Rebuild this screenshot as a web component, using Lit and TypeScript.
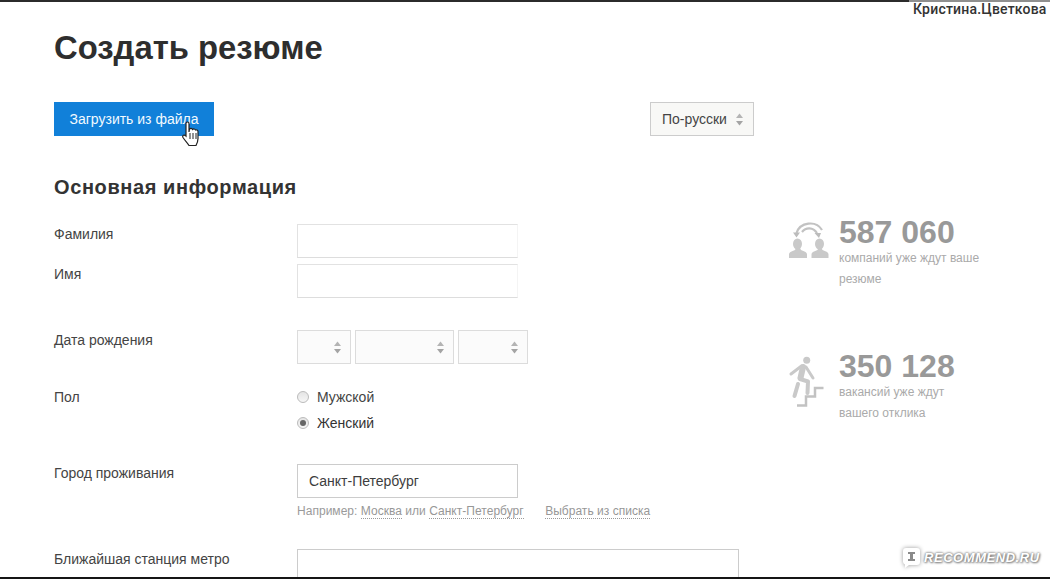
import { LitElement, html, css } from "lit";
import { customElement } from "lit/decorators.js";

const arrows = () => html`<svg width="7" height="13" viewBox="0 0 7 13"><path d="M3.500 0.500L7 5H0Z" fill="#b4b4b4"/><path d="M0 8H7L3.500 12.500Z" fill="#a4a4a4"/></svg>`;

@customElement("app-root")
export class AppRoot extends LitElement {
  static styles = css`
    :host {
      display: block;
      width: 1050px;
      height: 579px;
      position: relative;
      overflow: hidden;
      background: #fff;
      font-family: "Liberation Sans", Arial, sans-serif;
      color: #333;
      font-size: 14px;
    }
    .topbar { display: flex; height: 2px; }
    .topbar .dark { width: 909px; background: #2b2b2b; }
    .topbar .light { flex: 1; background: #8f8f8f; }
    .user {
      position: absolute; left: 913px; top: 2px;
      font: 500 14px/15px Roboto, sans-serif; color: #333; letter-spacing: 0.2px;
    }
    .page { display: grid; grid-template-columns: 735px 1fr; padding-left: 54px; }
    h1 { margin: 26px 0 0; font-size: 32.8px; line-height: 40px; font-weight: 700; color: #2e2e2e; }
    .actions { display: flex; justify-content: space-between; width: 700px; margin-top: 34px; }
    .upload {
      width: 160px; height: 34px; background: #1180d9; color: #f2faff;
      font-size: 14px; display: flex; align-items: center; justify-content: center;
    }
    .lang {
      box-sizing: border-box; width: 104px; height: 34px; border: 1px solid #ccc; background: #f8f8f6;
      display: flex; align-items: center; justify-content: space-between; padding: 0 10px 0 11px;
      font-size: 14px; color: #444;
    }
    h2 { margin: 38px 0 0; font-size: 20px; line-height: 26px; font-weight: 700; color: #333; letter-spacing: 0.6px; }
    .row { display: grid; grid-template-columns: 243px 1fr; }
    .label { font-size: 14px; line-height: 20px; color: #444; }
    .label.up { margin-top: -1px; }
    .field {
      box-sizing: border-box; height: 34px; width: 221px; border: 1px solid #d9d9d9; background: #fff;
      display: flex; align-items: center; padding: 0 11px; font-size: 14px; color: #444;
    }
    .ghost { border-color: #e2e2e2; border-right-color: #f4f4f4; border-bottom-color: #ddd; }
    .r1 { margin-top: 24px; }
    .r2 { margin-top: 6px; }
    .r3 { margin-top: 32px; }
    .r4 { margin-top: 23px; }
    .r5 { margin-top: 31px; }
    .r6 { margin-top: 30px; }
    .date { display: flex; gap: 4px; }
    .dsel {
      box-sizing: border-box; height: 34px; border: 1px solid #dcdcdc; background: #fbfbfb;
      display: flex; align-items: center; justify-content: flex-end; padding-right: 9px;
    }
    .radios { display: flex; flex-direction: column; gap: 6px; }
    .radio { display: flex; align-items: center; gap: 8px; font-size: 14px; line-height: 20px; color: #444; }
    .radio.on { color: #333; }
    .dot {
      box-sizing: border-box; width: 12px; height: 12px; border-radius: 50%; border: 1px solid #bbb;
      background: linear-gradient(#e4e4e4, #f6f6f6); display: flex; align-items: center; justify-content: center;
    }
    .dot i { display: block; width: 6px; height: 6px; border-radius: 50%; background: #666; }
    .city { color: #3d3d3d; border-color: #ccc; }
    .hint { margin-top: 5px; font-size: 12px; line-height: 16px; color: #9a9a9a; white-space: nowrap; letter-spacing: 0.03px; }
    .hint span { color: #979797; border-bottom: 1px dotted #9a9a9a; }
    .hint .choose { margin-left: 18px; }
    .metro { width: 442px; border-color: #ccc; }
    .aside { padding-top: 213px; display: flex; flex-direction: column; gap: 59px; }
    .stat { display: grid; grid-template-columns: 50px 1fr; width: 200px; }
    .ico { margin-left: -4px; }
    .ico1 { margin-top: 3px; }
    .ico2 { margin-top: 4px; }
    .num { font-size: 32px; line-height: 34px; font-weight: 700; color: #999; white-space: nowrap; }
    .txt { font-size: 12px; line-height: 21px; color: #aaa; margin-top: -1px; }
    .cursor { position: absolute; left: 182px; top: 121px; }
    .bottombar { position: absolute; left: 0; right: 0; bottom: 0; height: 2px; background: #151515; }
    .wm { position: absolute; left: 902px; top: 547px; display: flex; align-items: center; gap: 3px; }
    .wm .bubble { filter: drop-shadow(0 0 2px #999); }
    .wm b {
      font: italic 700 13px/16px "Liberation Sans", sans-serif; color: #fff; letter-spacing: 0.55px;
      text-shadow: 0 0 3px #777, 0 0 2px #888, 1px 1px 2px #999;
    }
  `;

  render() {
    return html`
      <div class="topbar"><div class="dark"></div><div class="light"></div></div>
      <div class="user">Кристина.Цветкова</div>
      <div class="page">
        <main>
          <h1>Создать резюме</h1>
          <div class="actions">
            <div class="upload">Загрузить из файла</div>
            <div class="lang">По-русски ${arrows()}</div>
          </div>
          <h2>Основная информация</h2>
          <div class="row r1"><div class="label">Фамилия</div><div class="field ghost"></div></div>
          <div class="row r2"><div class="label">Имя</div><div class="field ghost"></div></div>
          <div class="row r3"><div class="label">Дата рождения</div>
            <div class="date">
              <div class="dsel" style="width:54px">${arrows()}</div>
              <div class="dsel" style="width:99px">${arrows()}</div>
              <div class="dsel" style="width:70px">${arrows()}</div>
            </div>
          </div>
          <div class="row r4"><div class="label">Пол</div>
            <div class="radios">
              <div class="radio"><span class="dot"></span>Мужской</div>
              <div class="radio on"><span class="dot"><i></i></span>Женский</div>
            </div>
          </div>
          <div class="row r5"><div class="label up">Город проживания</div>
            <div>
              <div class="field city">Санкт-Петербург</div>
              <div class="hint">Например: <span>Москва</span> или <span>Санкт-Петербург</span> <span class="choose">Выбрать из списка</span></div>
            </div>
          </div>
          <div class="row r6"><div class="label">Ближайшая станция метро</div><div class="field metro"></div></div>
        </main>
        <aside class="aside">
          <div class="stat">
            <svg class="ico ico1" width="50" height="44" viewBox="0 0 50 44">
              <g fill="#c9c9c9">
                <ellipse cx="12.500" cy="26" rx="4.500" ry="5.500"/>
                <path d="M4 40v-3.500c0-1.500 1-2.500 2.500-3l3.500-1.500 1-2h4l1 2 3.500 1.500c1.500.5 2.500 1.500 2.500 3V40z"/>
                <ellipse cx="34.500" cy="26" rx="4.500" ry="5.500"/>
                <path d="M26.500 40v-3.500c0-1.500 1-2.500 2.500-3l3.500-1.500 1-2h3l1 2 3.500 1.500c1.500.5 2.500 1.500 2.500 3V40z"/>
              </g>
              <g fill="none" stroke="#c2c2c2" stroke-width="2.200">
                <path d="M11.500 15C15 4 31 2 37 12"/>
                <path d="M17 14C21 9 28 9 32 15"/>
              </g>
              <path d="M8 14.500h7l-3.500 5zM29.500 15h6.500l-2 5z" fill="#bcbcbc"/>
            </svg>
            <div><div class="num">587 060</div><div class="txt">компаний уже ждут ваше резюме</div></div>
          </div>
          <div class="stat">
            <svg class="ico ico2" width="50" height="58" viewBox="0 0 50 58">
              <circle cx="21.700" cy="7.300" r="3.500" fill="#c9c9c9"/>
              <g fill="none" stroke="#c9c9c9" stroke-linecap="round" stroke-linejoin="round">
                <path d="M18 14L15.500 25" stroke-width="6"/>
                <path d="M16.500 13L6 21" stroke-width="3"/>
                <path d="M21 14L28 25" stroke-width="3"/>
                <path d="M15 26L23 28.500L22.500 40" stroke-width="4"/>
                <path d="M13 31L9.500 43" stroke-width="4"/>
              </g>
              <path d="M12 52.500h9v-9h9v-8.500h8.500" fill="none" stroke="#c2c2c2" stroke-width="2.500"/>
            </svg>
            <div><div class="num">350 128</div><div class="txt">вакансий уже ждут<br />вашего отклика</div></div>
          </div>
        </aside>
      </div>
      <svg class="cursor" width="19" height="27" viewBox="0 0 19 27">
        <path d="M4 2.500c0-2 3-2 3 0V11l.5-3c1-1 2.500-1 3 .5 1-1 2.500-.5 3 .5 1-.5 2.500 0 2.500 1.500v7c0 3-1 5-2 7H7c-1-2-4-5-6-8-1-2 1-3.500 3-1.500z" fill="#fff" stroke="#222" stroke-width="1.200"/>
        <path d="M8 12v6M11 12v6M14 12v6" stroke="#222" stroke-width="1"/>
      </svg>
      <div class="wm">
        <svg class="bubble" width="19" height="22" viewBox="0 0 19 22">
          <path d="M4 1h11a3 3 0 0 1 3 3v11a3 3 0 0 1-3 3H7l-4 3v-3.500A3 3 0 0 1 1 15V4a3 3 0 0 1 3-3z" fill="#fff"/>
          <path d="M6 5h7v2h-2v5h2v2H6v-2h2V7H6z" fill="#8a8a8a"/>
        </svg>
        <b>RECOMMEND.RU</b>
      </div>
      <div class="bottombar"></div>
    `;
  }
}
